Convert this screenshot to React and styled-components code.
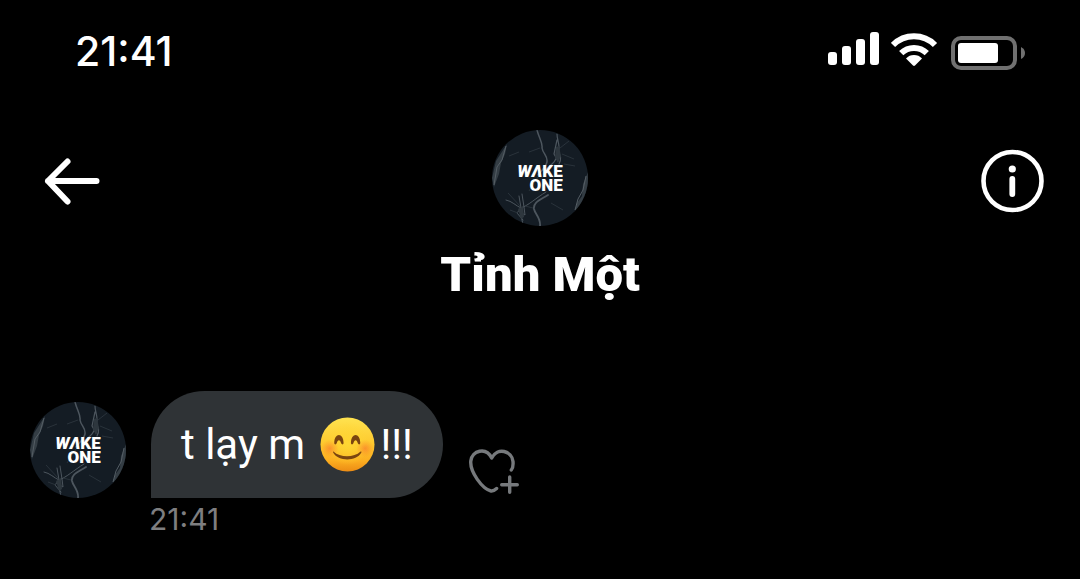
import React from 'react';
import styled, { createGlobalStyle } from 'styled-components';

const GlobalStyle = createGlobalStyle`
  * {
    box-sizing: border-box;
  }

  body {
    margin: 0;
    background: #000;
    color: #fff;
    font-family: Roboto, "Noto Sans", sans-serif;
  }
`;

const Screen = styled.div`
  display: flex;
  flex-direction: column;
`;

const StatusBar = styled.div`
  display: flex;
  justify-content: space-between;
  align-items: center;
  height: 102px;
  padding: 0 54px 0 75px;
`;

const Time = styled.time`
  display: block;
  font-family: Inter, sans-serif;
`;

const Clock = styled(Time)`
  font-size: 41px;
  font-weight: 500;
  line-height: 48px;
`;

const StatusIcons = styled.div`
  display: flex;
  align-items: center;
  gap: 12px;

  svg {
    display: block;
  }
`;

const Header = styled.header`
  display: grid;
  grid-template-columns: 64px 1fr 64px;
  align-items: start;
  padding: 28px 36px 0;
`;

const IconButton = styled.button`
  display: block;
  padding: 0;
  border: 0;
  background: none;
  color: ${props => props.$color || '#fff'};
  cursor: pointer;

  svg {
    display: block;
  }
`;

const HeaderButton = styled(IconButton)`
  margin-top: 19px;
`;

const Profile = styled.div`
  display: flex;
  flex-direction: column;
  align-items: center;
  gap: 21px;
`;

const Name = styled.h1`
  margin: 0;
  font-size: 49px;
  font-weight: 900;
  line-height: 56px;
`;

const AvatarCircle = styled.div`
  display: grid;
  flex: none;
  width: 96px;
  height: 96px;
  border-radius: 50%;
  overflow: hidden;
  background: #141c24;

  > * {
    grid-area: 1 / 1;
  }
`;

const Wordmark = styled.div`
  place-self: center;
  font-size: 17px;
  font-weight: 900;
  line-height: 14px;
  text-align: right;

  span {
    display: block;
  }

  i {
    font-style: italic;
  }
`;

const Messages = styled.main`
  padding: 88px 30px 0;
`;

const MessageRow = styled.div`
  display: flex;
  align-items: flex-end;
`;

const Bubble = styled.p`
  display: flex;
  align-items: center;
  margin: 0 26px 0 25px;
  padding: 26px 30px;
  border-radius: 54px 54px 54px 0;
  background: #2f3336;
  font-size: 42px;
  line-height: 55px;
  white-space: pre;

  svg {
    display: block;
    margin: 0 5px;
  }
`;

const ReactButton = styled(IconButton)`
  margin-bottom: 4px;
`;

const SentAt = styled(Time)`
  margin-left: 119px;
  color: #7e7e80;
  font-size: 30px;
  line-height: 42px;
`;

const Avatar = () => (
  <AvatarCircle>
    <svg width="96" height="96" viewBox="0 0 96 96" fill="none" aria-hidden="true">
      <g stroke="#4d565e" strokeLinecap="round">
        <path d="M45 0 C47 8 51 13 50 18 C51 24 56 26 55 32 C54 37 49 41 46 45" strokeWidth="1.5" />
        <path d="M65 4 C65 11 69 16 66 23 C65 31 59 35 54 39 M66 23 C70 26 69 30 67 34 M65 10 L62 24 L66 31" strokeWidth="1.2" />
        <path d="M56 65 C48 70 41 72 42 79 C43 84 49 88 48 96" strokeWidth="1.8" />
        <path d="M54 62 C44 68 37 75 29 78 C28 86 31 91 31 96 M29 78 C24 76 20 71 14 70 M27 66 L29 78 L25 83 L31 90" strokeWidth="1" />
        <path d="M30 64 L32 77 L33 85 L28 82" strokeWidth="1" />
      </g>
      <g stroke="#2a333b" strokeWidth="1">
        <path d="M17 26 L27 22 M70 24 L82 29 M72 34 L83 36 M48 18 L37 22 M68 18 L77 11 M18 80 L26 83 M33 76 L41 78 M59 73 L71 80 M16 63 L28 76 M46 47 L37 61" />
      </g>
      <path d="M64 17 L67 16 L69 26 L66 33 L63 27 Z M26 79 L31 76 L32 87 L29 89 Z" fill="#2e373e" />
      <path d="M15 14 L13 24 L9 33 L7 44 L2 57 L0 48 L4 31 Z" fill="#343d44" />
      <path d="M14 16 L10 30 L5 37 L2 55" stroke="#555e65" />
      <path d="M96 42 L91 54 L90 66 L85 73 L82 84 L91 74 L96 60 Z" fill="#343d44" />
      <path d="M94 46 L91 60 L86 69 L83 80" stroke="#555e65" />
    </svg>
    <Wordmark>
      <span><i>WΛ</i>KE</span>
      <span>ONE</span>
    </Wordmark>
  </AvatarCircle>
);

const Signal = () => (
  <svg width="51" height="38" viewBox="0 0 51 38" fill="#fff" aria-hidden="true">
    <rect x="0" y="20" width="9" height="13" rx="3" />
    <rect x="14" y="14" width="9" height="19" rx="3" />
    <rect x="28" y="7" width="9" height="26" rx="3" />
    <rect x="42" y="0" width="9" height="33" rx="3" />
  </svg>
);

const Wifi = () => (
  <svg width="48" height="38" viewBox="0 -1 48 38" aria-hidden="true">
    <g fill="none" stroke="#fff" strokeWidth="6">
      <path d="M2 12 A29.7 29.7 0 0 1 44 12" />
      <path d="M10.2 20.2 A18.1 18.1 0 0 1 35.8 20.2" />
    </g>
    <path d="M15 25.5 A11 11 0 0 1 31 25.5 L24 32.6 Q23 33.5 22 32.6 Z" fill="#fff" />
  </svg>
);

const Battery = () => (
  <svg width="75" height="38" viewBox="0 -4 75 38" aria-hidden="true">
    <rect x="2" y="2" width="62" height="30" rx="8" fill="none" stroke="#707070" strokeWidth="4" />
    <rect x="7" y="7" width="40" height="20" rx="3" fill="#fff" />
    <path d="M70 11 Q74 13 74 17 Q74 21 70 23 Z" fill="#707070" />
  </svg>
);

const ArrowLeft = () => (
  <svg width="64" height="64" viewBox="0 0 64 64" fill="none" stroke="currentColor" strokeWidth="6" strokeLinecap="round" strokeLinejoin="round">
    <path d="M60.5 32 H12 M31.5 12.5 L12 32 L31.5 52.5" />
  </svg>
);

const Info = () => (
  <svg width="64" height="64" viewBox="0 0 64 64" fill="none">
    <circle cx="32.5" cy="32" r="29" stroke="currentColor" strokeWidth="4.6" />
    <circle cx="32.3" cy="20" r="3.6" fill="currentColor" />
    <path d="M32.3 30 V45" stroke="currentColor" strokeWidth="5.8" strokeLinecap="round" />
  </svg>
);

const HeartPlus = () => (
  <svg width="50" height="46" viewBox="0 0 50 46" fill="none" stroke="currentColor" strokeWidth="3.4" strokeLinecap="round" strokeLinejoin="round">
    <path d="M42.3 22 C44 20 44.3 17 44 13.5 C43 3 28.5 -1.5 22.7 10 C17 -1.5 3 2.5 1.8 13 C0.7 24 13.5 41 22 43 C24 43.3 26 42 27.6 40.5" />
    <path d="M32.7 36.7 H48.3 M40.7 29 V44.3" />
  </svg>
);

const SmileEmoji = () => (
  <svg width="55" height="55" viewBox="0 0 56 56" role="img" aria-label="😊">
    <defs>
      <linearGradient id="face" x1="0" y1="0" x2="0" y2="1">
        <stop offset="0" stopColor="#ffe34f" />
        <stop offset="0.5" stopColor="#fec82d" />
        <stop offset="0.8" stopColor="#fcae20" />
        <stop offset="1" stopColor="#ec8c14" />
      </linearGradient>
      <radialGradient id="shine">
        <stop offset="0" stopColor="#ffd633" />
        <stop offset="1" stopColor="#ffd733" stopOpacity="0" />
      </radialGradient>
      <radialGradient id="blush">
        <stop offset="0" stopColor="#f9702c" stopOpacity="0.6" />
        <stop offset="1" stopColor="#f9802c" stopOpacity="0" />
      </radialGradient>
    </defs>
    <circle cx="28" cy="28" r="27.5" fill="url(#face)" />
    <circle cx="28" cy="27" r="22" fill="url(#shine)" />
    <circle cx="10" cy="32" r="9" fill="url(#blush)" />
    <circle cx="46" cy="32" r="9" fill="url(#blush)" />
    <path d="M14.5 26.5 C14.5 15.5 24 15.5 24 26.5 C24 28.3 22 28.3 21.5 26.7 C20.5 22.5 18 22.5 17 26.7 C16.5 28.3 14.5 28.3 14.5 26.5 Z M31.5 26.5 C31.5 15.5 41 15.5 41 26.5 C41 28.3 39 28.3 38.5 26.7 C37.5 22.5 35 22.5 34 26.7 C33.5 28.3 31.5 28.3 31.5 26.5 Z" fill="#7b4510" />
    <path d="M14 35.5 C20 41.5 35 41.5 41 35.5 C42 34.7 42.5 35.3 42 36.5 C37 45.5 18.5 45.5 13.5 36.5 C13 35.3 13.5 34.7 14 35.5 Z" fill="#7b4510" />
  </svg>
);

const App = () => {
  return (
    <Screen>
      <GlobalStyle />
      <StatusBar>
        <Clock>21:41</Clock>
        <StatusIcons>
          <Signal />
          <Wifi />
          <Battery />
        </StatusIcons>
      </StatusBar>

      <Header>
        <HeaderButton type="button" aria-label="Back">
          <ArrowLeft />
        </HeaderButton>
        <Profile>
          <Avatar />
          <Name>Tỉnh Một</Name>
        </Profile>
        <HeaderButton type="button" aria-label="Info">
          <Info />
        </HeaderButton>
      </Header>

      <Messages>
        <MessageRow>
          <Avatar />
          <Bubble>
            <span>t lạy m </span>
            <SmileEmoji />
            <span>!!!</span>
          </Bubble>
          <ReactButton type="button" aria-label="React" $color="#76797c">
            <HeartPlus />
          </ReactButton>
        </MessageRow>
        <SentAt>21:41</SentAt>
      </Messages>
    </Screen>
  );
};

export default App;
